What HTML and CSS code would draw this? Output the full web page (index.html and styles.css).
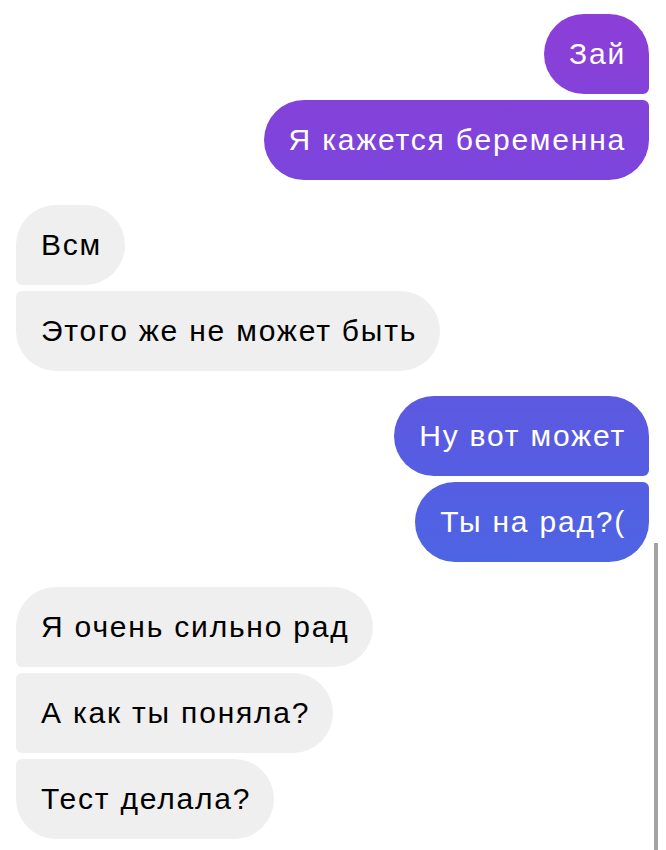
FILE: index.html
```html
<!DOCTYPE html>
<html lang="ru">
<head>
    <meta charset="UTF-8">
    <meta name="viewport" content="width=device-width, initial-scale=1.0">
    <title>Чат</title>
    <link rel="stylesheet" href="styles.css">
</head>
<body>
    <div class="chat">
        <!-- outgoing -->
        <div class="group out">
            <div class="msg">Зай</div>
            <div class="msg">Я кажется беременна</div>
        </div>

        <!-- incoming -->
        <div class="group in">
            <div class="msg">Всм</div>
            <div class="msg">Этого же не может быть</div>
        </div>

        <div class="group out">
            <div class="msg">Ну вот может</div>
            <div class="msg">Ты на рад?(</div>
        </div>

        <div class="group in">
            <div class="msg">Я очень сильно рад</div>
            <div class="msg">А как ты поняла?</div>
            <div class="msg">Тест делала?</div>
        </div>
    </div>
    <div class="scrollbar"></div>
</body>
</html>
```

FILE: styles.css
```css
body {
    margin: 0;
    padding: 0;
    background-color: #fff;
    font-family: "Liberation Sans", Arial, sans-serif;
    overflow: hidden;
}

.chat {
    display: flex;
    flex-direction: column;
    gap: 25px;
    padding: 14px 17px 0 16px;
}

.group {
    display: flex;
    flex-direction: column;
    gap: 6px;
}

.group.out {
    align-items: flex-end;
}

.group.in {
    align-items: flex-start;
}

.msg {
    font-size: 30px;
    line-height: 30px;
    letter-spacing: 1.8px;
    padding: 25px 23px 25px 25px;
    border-radius: 40px;
    white-space: nowrap;
}

.out .msg {
    color: #fff;
    /* gradient follows the screen, like in the app */
    background: linear-gradient(180deg, #8e3ed7 0px, #7b45dc 180px, #5a5ae1 420px, #4a67e4 600px) fixed;
    border-top-right-radius: 6px;
    border-bottom-right-radius: 6px;
}

.out .msg:first-child {
    border-top-right-radius: 40px;
}

.out .msg:last-child {
    border-bottom-right-radius: 40px;
}

.in .msg {
    color: #000;
    background-color: #efefef;
    border-top-left-radius: 6px;
    border-bottom-left-radius: 6px;
}

.in .msg:first-child {
    border-top-left-radius: 40px;
}

.in .msg:last-child {
    border-bottom-left-radius: 40px;
}

.scrollbar {
    position: absolute;
    top: 543px;
    right: 8px;
    width: 4px;
    height: 307px;
    background-color: #a3a3a3;
}
```
